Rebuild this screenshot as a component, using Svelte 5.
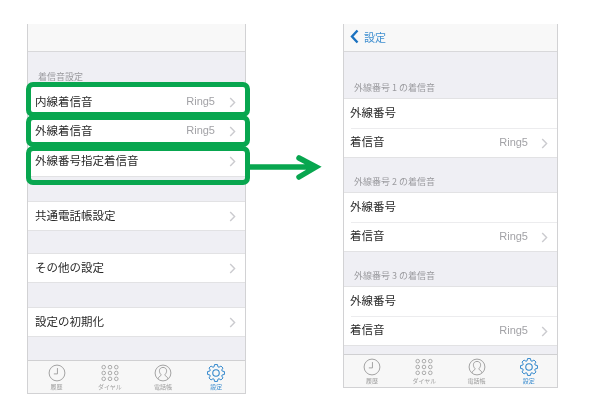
<script>
  const leftGroups = [
    { gap: 20, title: '着信音設定', rows: [
      { label: '内線着信音', value: 'Ring5', h: 29 },
      { label: '外線着信音', value: 'Ring5', h: 30 },
      { label: '外線番号指定着信音', value: '', h: 30 }
    ] },
    { gap: 24, rows: [{ label: '共通電話帳設定', value: '', h: 28 }] },
    { gap: 22, rows: [{ label: 'その他の設定', value: '', h: 28 }] },
    { gap: 24, rows: [{ label: '設定の初期化', value: '', h: 28 }] }
  ];
  const rightGroups = ['1', '2', '3'].map((n, i) => ({
    gap: i === 0 ? 31 : 19,
    title: `外線番号 ${n} の着信音`,
    rows: [
      { label: '外線番号', value: '', h: 29, plain: true },
      { label: '着信音', value: 'Ring5', h: 29 }
    ]
  }));
  const phones = [
    { key: 'left', groups: leftGroups, back: false },
    { key: 'right', groups: rightGroups, back: true }
  ];
  const dots = [0, 1, 2].flatMap((y) => [0, 1, 2].map((x) => [3 + x * 7, 3.5 + y * 6.5]));
  const boxes = [
    { cls: 'b1' }, { cls: 'b2' }, { cls: 'b3' }
  ];
  const gear = Array.from({ length: 8 }, (_, i) => {
    const a = (i * Math.PI) / 4 - Math.PI / 2;
    const pt = (r, o) => `${(10 + r * Math.cos(a + o)).toFixed(2)} ${(10 + r * Math.sin(a + o)).toFixed(2)}`;
    return `${i ? 'L' : 'M'}${pt(7.2, -0.3)} L${pt(9.5, -0.17)} L${pt(9.5, 0.17)} L${pt(7.2, 0.3)}`;
  }).join(' ') + ' Z';
</script>

<div class="stage">
  {#each phones as phone}
    <section class="phone {phone.key}">
      <header class="nav">
        {#if phone.back}
          <svg class="back" width="9" height="15" viewBox="0 0 9 15"><path d="M7.5 1.5 L2 7.5 L7.5 13.5" fill="none" stroke="#1b72c0" stroke-width="2.4" /></svg>
          <span class="navtext">設定</span>
        {/if}
      </header>
      <div class="content">
        {#each phone.groups as group}
          <div class="group" style="padding-top:{group.gap}px">
            {#if group.title}<div class="gtitle">{group.title}</div>{/if}
            <div class="rows">
              {#each group.rows as row}
                <div class="row" style="height:{row.h}px">
                  <span class="label">{row.label}</span>
                  {#if row.value}<span class="value">{row.value}</span>{/if}
                  {#if !row.plain}
                    <svg class="chev" width="7" height="11" viewBox="0 0 7 11"><path d="M1.2 1 L5.6 5.5 L1.2 10" fill="none" stroke="#cbcbcf" stroke-width="1.4" /></svg>
                  {/if}
                </div>
              {/each}
            </div>
          </div>
        {/each}
      </div>
      <nav class="tabs">
        <div class="tab">
          <svg width="18" height="18" viewBox="0 0 20 20"><circle cx="10" cy="10" r="8.8" fill="none" stroke="#9a9a9a" stroke-width="1" /><path d="M10.5 4.5 V11 H6.5" fill="none" stroke="#9a9a9a" stroke-width="1" /></svg>
          <span>履歴</span>
        </div>
        <div class="tab">
          <svg width="18" height="18" viewBox="0 0 20 20">
            {#each dots as d}<circle cx={d[0]} cy={d[1]} r="2" fill="none" stroke="#9a9a9a" stroke-width="0.9" />{/each}
          </svg>
          <span>ダイヤル</span>
        </div>
        <div class="tab">
          <svg width="18" height="18" viewBox="0 0 20 20"><circle cx="10" cy="10" r="8.8" fill="none" stroke="#9a9a9a" stroke-width="1" /><path d="M4.5 16.5 C5 13.5 8 13.5 8 12 C6.5 10.5 6 9 6 7.5 C6 5 8 3.8 10 3.8 C12 3.8 14 5 14 7.5 C14 9 13.5 10.5 12 12 C12 13.5 15 13.5 15.5 16.5" fill="none" stroke="#9a9a9a" stroke-width="1" /></svg>
          <span>電話帳</span>
        </div>
        <div class="tab active">
          <svg width="18" height="18" viewBox="0 0 20 20"><path d={gear} fill="none" stroke="#2f86cb" stroke-width="1.1" stroke-linejoin="round" /><circle cx="10" cy="10" r="3.6" fill="none" stroke="#2f86cb" stroke-width="1.2" /></svg>
          <span>設定</span>
        </div>
      </nav>
    </section>
  {/each}

  {#each boxes as box}<div class="box {box.cls}"></div>{/each}
  <svg class="arrow" width="76" height="26" viewBox="0 0 76 26">
    <path d="M0 13 H66 M50 4 L67 13 L50 23" fill="none" stroke="#08a64f" stroke-width="5.5" stroke-linecap="round" stroke-linejoin="miter" />
  </svg>
</div>

<style>
  :global(body) {
    margin: 0;
    background: #fff;
  }
  .stage {
    position: relative;
    width: 598px;
    height: 409px;
    overflow: hidden;
    background: #fff;
    display: flex;
    align-items: flex-start;
    font-family: "Noto Sans CJK JP", "Noto Sans", sans-serif;
  }
  .phone {
    display: flex;
    flex-direction: column;
    background: #efeff4;
    border-left: 1px solid #d2d2d4;
    border-right: 1px solid #d2d2d4;
    border-bottom: 1px solid #d2d2d4;
    box-sizing: border-box;
    margin-top: 24px;
    filter: blur(0.35px);
  }
  .left {
    width: 219px;
    height: 370px;
    margin-left: 27px;
  }
  .right {
    width: 215px;
    height: 364px;
    margin-left: 97px;
  }
  .nav {
    height: 28px;
    flex: none;
    box-sizing: border-box;
    background: #f8f8f8;
    border-bottom: 1px solid #d8d8da;
    display: flex;
    align-items: center;
    padding: 0 0 2px 6px;
    gap: 5px;
  }
  .navtext {
    color: #3f8fd0;
    font-size: 11px;
  }
  .content {
    flex: 1;
    min-height: 0;
    overflow: hidden;
  }
  .gtitle {
    font-size: 9px;
    line-height: 10px;
    color: #9a9a9e;
    padding: 0 0 4px 10px;
  }
  .right .gtitle {
    padding-bottom: 5px;
  }
  .rows {
    background: #fff;
    border-top: 1px solid #e2e2e4;
    border-bottom: 1px solid #e2e2e4;
  }
  .row {
    display: flex;
    align-items: center;
    box-sizing: border-box;
    padding: 0 9px 2px 7px;
    position: relative;
  }
  .right .row {
    padding: 0 9px 4px 6px;
  }
  .row + .row::before {
    content: "";
    position: absolute;
    top: 0;
    left: 7px;
    right: 0;
    height: 1px;
    background: #ececee;
  }
  .label {
    font-size: 11.5px;
    color: #2a2a2a;
    flex: 1;
  }
  .value {
    font-family: "Liberation Sans", sans-serif;
    font-size: 11px;
    color: #a2a2a6;
    margin-right: 14px;
  }
  .right .value {
    margin: 2px 13px 0 0;
  }
  .chev {
    margin-top: 3px;
  }
  .right .chev {
    margin-top: 6px;
  }
  .tabs {
    flex: none;
    height: 33px;
    box-sizing: border-box;
    background: #f7f7f7;
    border-top: 1px solid #d0d0d2;
    display: grid;
    grid-template-columns: repeat(4, 1fr);
    padding: 3px 2px 0;
  }
  .tab {
    display: flex;
    flex-direction: column;
    align-items: center;
    color: #a0a0a0;
    font-size: 6px;
    line-height: 8px;
    gap: 1px;
  }
  .tab.active {
    color: #3f8fd0;
  }
  .box {
    position: absolute;
    box-sizing: border-box;
    border: 5px solid #08a64f;
    border-radius: 7px;
    left: 26px;
    width: 224px;
    pointer-events: none;
  }
  .b1 { top: 82px; height: 35px; }
  .b2 { top: 115px; height: 32px; }
  .b3 { top: 146px; height: 39px; }
  .arrow {
    position: absolute;
    left: 249px;
    top: 154px;
  }
</style>
